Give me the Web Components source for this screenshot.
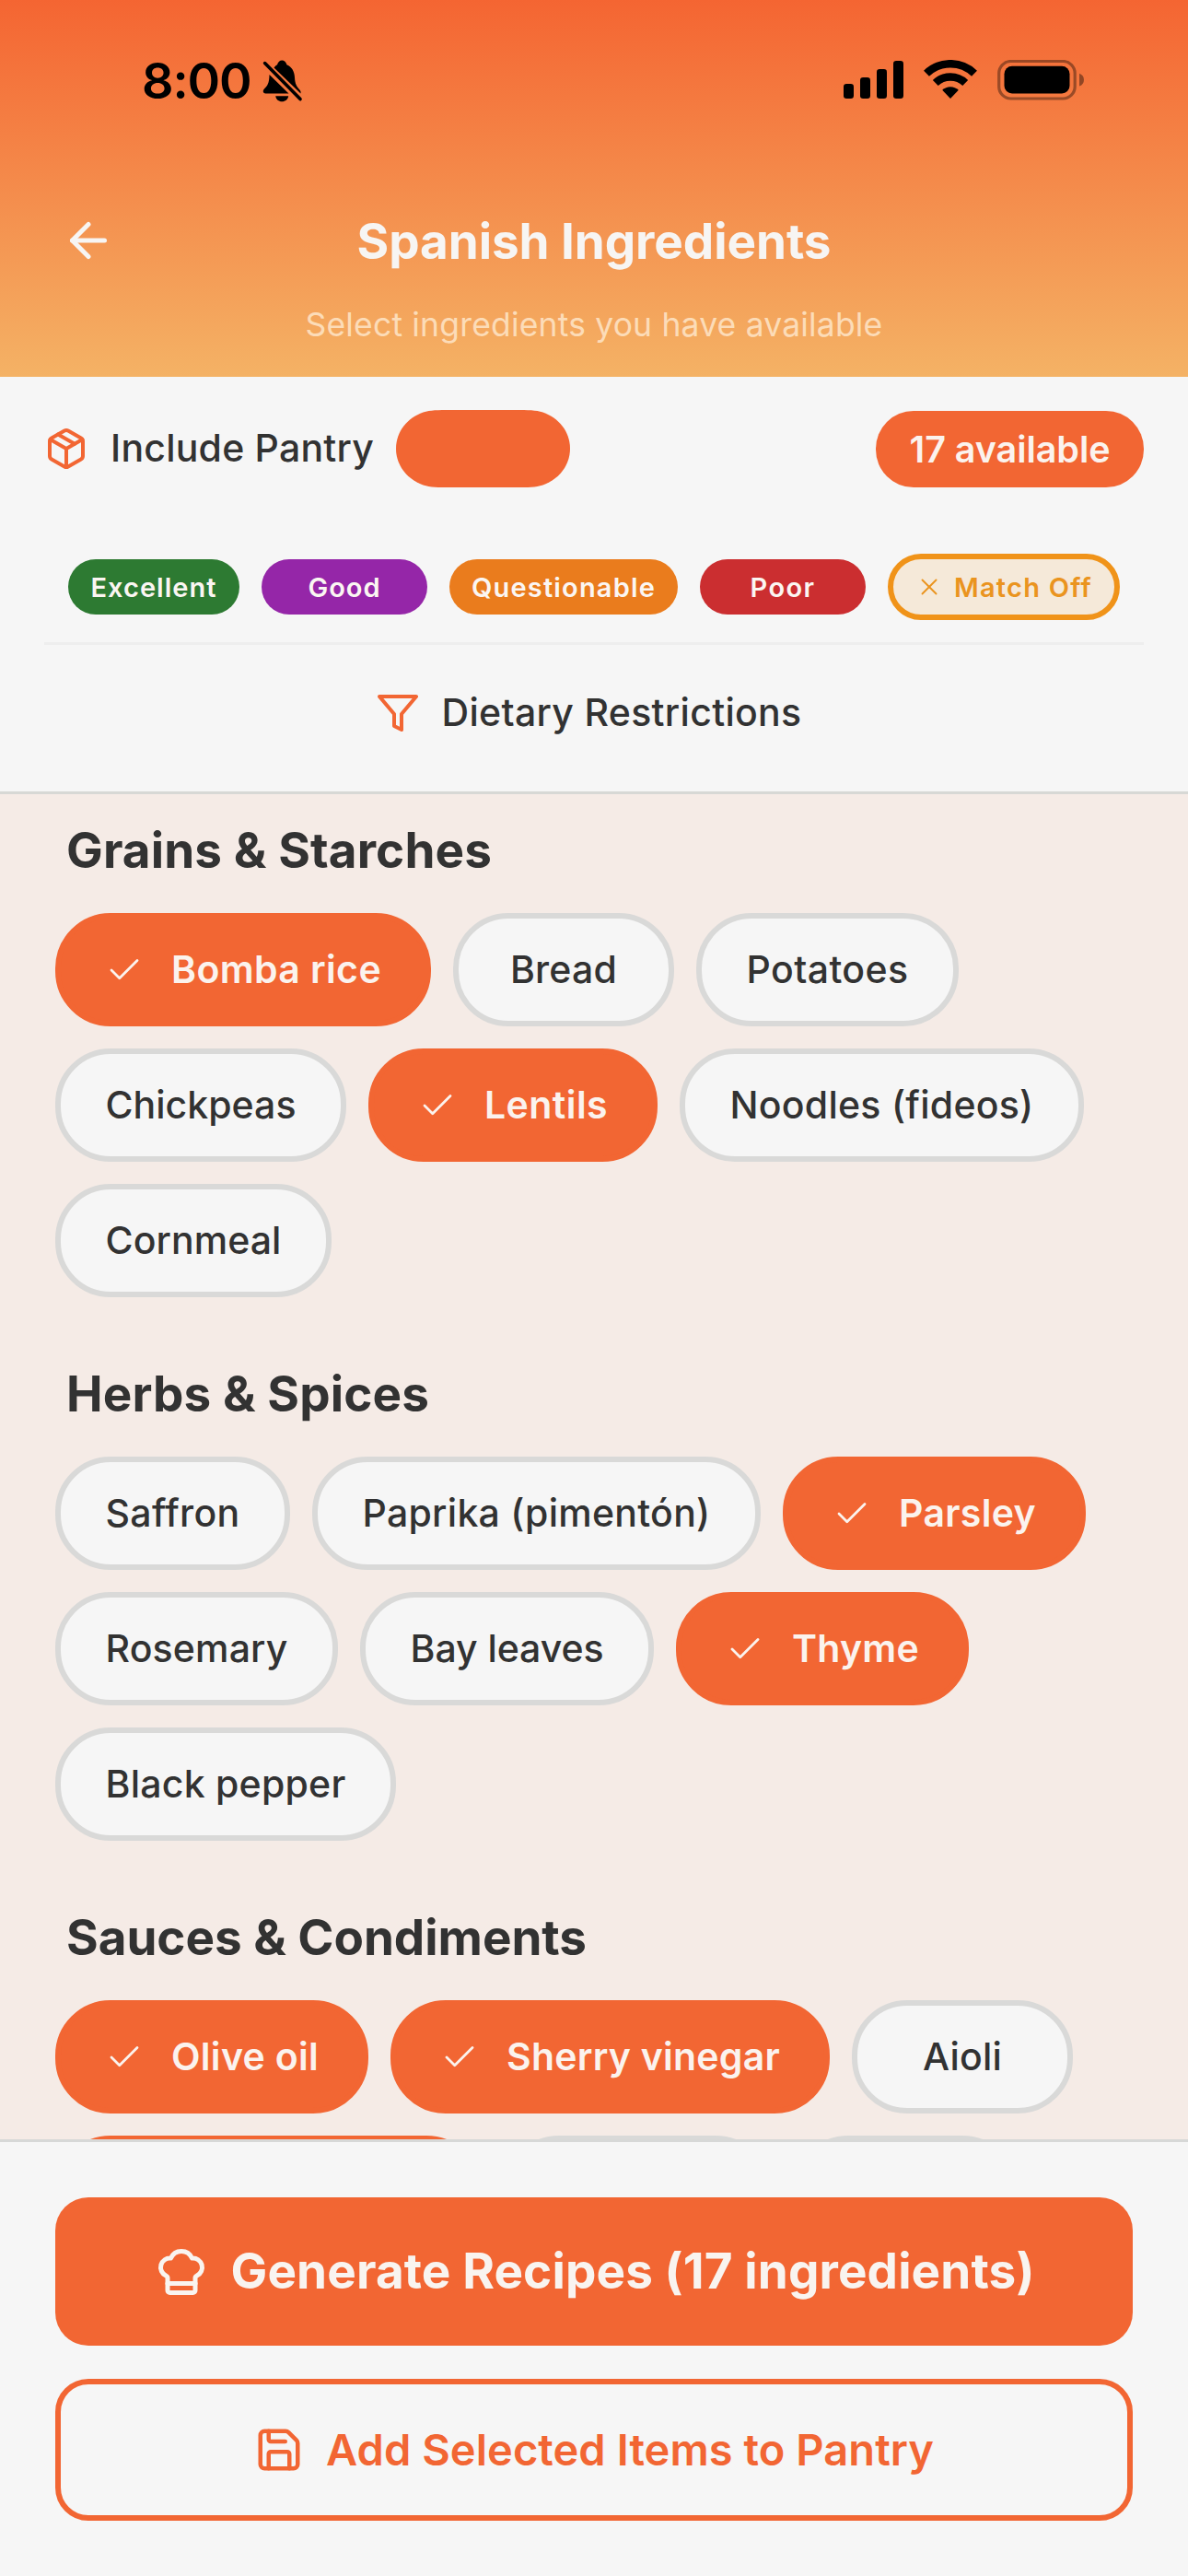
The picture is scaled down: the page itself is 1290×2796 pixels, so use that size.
<!DOCTYPE html>
<html lang="en">
<head>
<meta charset="utf-8">
<title>Spanish Ingredients</title>
<style>
html,body{margin:0;padding:0}
body{width:1290px;height:2796px;overflow:hidden;font-family:Inter,"Liberation Sans",sans-serif;background:#f5ebe6;color:#323232}
</style>
</head>
<body>
<pantry-app></pantry-app>
<script>
function define(name, html, after){
  const t=document.createElement('template'); t.innerHTML=html;
  customElements.define(name, class extends HTMLElement{
    constructor(){super();this.attachShadow({mode:'open'}).appendChild(t.content.cloneNode(true));}
    connectedCallback(){ if(after) after.call(this,this.shadowRoot); }
  });
}

/* A single text line tracked to a given advance width (w), s = size, b = weight, dy = optical shift */
customElements.define('track-text', class extends HTMLElement{
  connectedCallback(){
    const root=this.shadowRoot||this.attachShadow({mode:'open'});
    const g=n=>this.getAttribute(n);
    root.innerHTML=`<style>:host{display:block;white-space:nowrap;flex:none;line-height:1.2}span{display:inline-block}</style><span></span>`;
    const s=root.querySelector('span');
    s.textContent=g('text');
    s.style.fontSize=g('s')+'px'; s.style.fontWeight=g('b');
    if(g('w')){
      const w=+g('w'), n=[...g('text')].length;
      const nat=s.getBoundingClientRect().width;
      s.style.letterSpacing=((w-nat)/n).toFixed(3)+'px';
    }
    if(g('dy')) this.style.marginTop=g('dy')+'px';
  }
});

const ICONS={
  back:['<path d="m12 19-7-7 7-7"/><path d="M19 12H5"/>',2],
  box:['<path d="M11 21.73a2 2 0 0 0 2 0l7-4A2 2 0 0 0 21 16V8a2 2 0 0 0-1-1.73l-7-4a2 2 0 0 0-2 0l-7 4A2 2 0 0 0 3 8v8a2 2 0 0 0 1 1.73z"/><path d="M12 22V12"/><path d="m3.3 7 8.7 5 8.7-5"/><path d="m7.5 4.27 9 5.15"/>',2],
  filter:['<path d="M22 3H2l8 9.46V19l4 2v-8.54z"/>',2],
  check:['<path d="M20 6 9 17l-5-5"/>',1.6],
  x:['<path d="M18 6 6 18"/><path d="m6 6 12 12"/>',1.5],
  chef:['<path d="M17 21a1 1 0 0 0 1-1v-5.35c0-.457.316-.844.727-1.041a4 4 0 0 0-2.134-7.589 5 5 0 0 0-9.186 0 4 4 0 0 0-2.134 7.588c.411.198.727.585.727 1.041V20a1 1 0 0 0 1 1Z"/><path d="M6 17h12"/>',2],
  save:['<path d="M15.2 3a2 2 0 0 1 1.4.6l3.8 3.8a2 2 0 0 1 .6 1.4V19a2 2 0 0 1-2 2H5a2 2 0 0 1-2-2V5a2 2 0 0 1 2-2z"/><path d="M17 21v-7a1 1 0 0 0-1-1H8a1 1 0 0 0-1 1v7"/><path d="M7 3v4a1 1 0 0 0 1 1h7"/>',2]
};
customElements.define('line-icon', class extends HTMLElement{
  connectedCallback(){
    const root=this.shadowRoot||this.attachShadow({mode:'open'});
    const [p,w]=ICONS[this.getAttribute('name')], s=this.getAttribute('size');
    root.innerHTML=`<style>:host{display:block;flex:none}svg{display:block}</style>
    <svg width="${s}" height="${s}" viewBox="0 0 24 24" fill="none" stroke="currentColor" stroke-width="${w}" stroke-linecap="round" stroke-linejoin="round">${p}</svg>`;
  }
});

define('status-bar',`<style>
:host{display:flex;height:174px;box-sizing:border-box;padding:60px 112px 0 154px;justify-content:space-between;align-items:flex-start;color:#000}
.l{display:flex;align-items:flex-start;gap:12px}
.r{display:flex;align-items:flex-start;padding-top:5px}
svg{display:block}
</style>
<div class="l"><track-text text="8:00" s="54" b="600" w="118.500" dy="-4"></track-text>
<svg width="44" height="48" viewBox="0 0 44 48" style="margin-top:4px">
 <path d="M12.5 9.5C14 7.500 15.200 6.800 16 6.300C17 3.200 18.800 1.500 21.200 1.500s4.400 1.700 5.200 4.800c5.600 2.400 8.300 7.200 8.600 13.700.3 7 2.200 10 5.200 13.200 1.600 1.700 1.500 2.700 1.300 4.300z"/>
 <path d="M7.500 17 28.500 37.600H3.500c-2.800 0-3.700-2.900-1.600-5C5.300 29.300 7.400 26.500 7.500 17z"/>
 <path d="M14.200 40.200h14c-.5 3.800-3.500 6-7 6s-6.500-2.200-7-6z"/>
 <path d="M2.600 4.600 41 43.600" stroke="#000" stroke-width="3.600" stroke-linecap="round"/>
</svg></div>
<div class="r">
<svg width="66" height="44" viewBox="0 0 66 44"><rect x="0" y="26" width="11" height="16" rx="3.200"/><rect x="18" y="19" width="11" height="23" rx="3.200"/><rect x="36" y="10" width="11" height="32" rx="3.200"/><rect x="54" y="1" width="11" height="41" rx="3.200"/></svg>
<svg width="58" height="44" viewBox="0 0 58 44" style="margin-left:21.500px"><g fill="none" stroke="#000" stroke-width="8.500"><path d="M3 14.700A37.500 37.500 0 0 1 55 14.700"/><path d="M12.800 25A23.500 23.500 0 0 1 45.200 25"/></g><path d="M29 42 20.200 32.800A12.600 12.600 0 0 1 37.800 32.800Z"/></svg>
<svg width="95" height="44" viewBox="0 0 95 44" style="margin-left:22px"><rect x="1.700" y="1.500" width="82.500" height="40.500" rx="13" fill="none" stroke="#000" stroke-opacity=".37" stroke-width="3.200"/><rect x="7.500" y="6.800" width="71" height="29.600" rx="8.500"/><path d="M89 14.800c3.500 1.300 5 3.800 5 6.900s-1.500 5.600-5 6.900z" fill-opacity=".4"/></svg>
</div>`);

define('app-header',`<style>
:host{display:flex;flex-direction:column;height:409px;background:linear-gradient(#f46532,#f4b265);color:#f7f5f3}
.row{display:grid;grid-template-columns:60px 1fr 60px;padding:0 66px;height:174px;align-items:center;justify-items:center}
.sub{display:flex;justify-content:center;color:#fcdcb8;height:61px}
</style>
<status-bar></status-bar>
<div class="row"><line-icon name="back" size="60"></line-icon><track-text text="Spanish Ingredients" s="53" b="700" w="515" dy="3"></track-text></div>
<div class="sub"><track-text text="Select ingredients you have available" s="35.500" b="400" w="627" dy="-16"></track-text></div>`);

define('tag-pill',`<style>
:host{display:flex;box-sizing:border-box;height:60px;border-radius:30px;align-items:center;justify-content:center;color:#fbf6f2;flex:none;gap:12px}
:host([outline]){height:72px;border-radius:36px;border:6px solid #f09319;background:#f5e9d9;color:#ea941f}
</style><slot></slot>`,function(){this.style.width=this.getAttribute('w')+'px';if(this.hasAttribute('c'))this.style.background=this.getAttribute('c');});

define('filter-panel',`<style>
:host{display:flex;flex-direction:column;box-sizing:border-box;height:453px;background:#f6f6f6;border-bottom:3px solid #d7d8d5;padding:36px 48px 0}
.top{display:flex;align-items:center;height:84px}
.top line-icon,.diet line-icon{color:#f26633}
.lab{margin-left:24px}
.tog{display:block;margin-left:24px}
.badge{margin-left:auto;width:291px;height:83px;border-radius:41px;background:#f26633;color:#fbf3ee;display:flex;align-items:center;justify-content:center;margin-top:1px}
.tags{display:flex;gap:24px;align-items:center;justify-content:center;padding-top:72px;height:72px}
.diet{display:flex;align-items:center;justify-content:center;gap:24px;border-top:3px solid #eeeeee;margin-top:24px;height:148px;padding-right:12px}
</style>
<div class="top"><line-icon name="box" size="48"></line-icon><track-text class="lab" text="Include Pantry" s="41" b="500" w="286"></track-text>
<svg class="tog" width="189" height="84" viewBox="0 0 189 84"><path fill="#f26633" d="M60 0H129C144 0 151.500 0 159.500 2.600C176.500 8.500 189 23.500 189 42S176.500 75.500 159.500 81.400C151.500 84 144 84 129 84H60C45 84 37.500 84 29.500 81.400C12.500 75.500 0 60.500 0 42S12.500 8.500 29.500 2.600C37.500 0 45 0 60 0Z"/></svg>
<div class="badge"><track-text text="17 available" s="39.500" b="600" w="218" dy="2"></track-text></div></div>
<div class="tags">
<tag-pill w="186" c="#2d7a32"><track-text text="Excellent" s="29" b="600" w="137" dy="2"></track-text></tag-pill>
<tag-pill w="180" c="#9526a8"><track-text text="Good" s="29" b="600" w="79" dy="2"></track-text></tag-pill>
<tag-pill w="248" c="#ea7c1d"><track-text text="Questionable" s="29" b="600" w="200" dy="2"></track-text></tag-pill>
<tag-pill w="180" c="#cb2e30"><track-text text="Poor" s="29" b="600" w="71" dy="2"></track-text></tag-pill>
<tag-pill w="252" outline><line-icon name="x" size="30"></line-icon><track-text text="Match Off" s="29" b="600" w="150" dy="2"></track-text></tag-pill>
</div>
<div class="diet"><line-icon name="filter" size="48"></line-icon><track-text text="Dietary Restrictions" s="41" b="500" w="391"></track-text></div>`);

customElements.define('ingredient-chip', class extends HTMLElement{
  connectedCallback(){
    const root=this.shadowRoot||this.attachShadow({mode:'open'});
    const on=this.hasAttribute('on'), w=+this.getAttribute('w'), t=this.getAttribute('text');
    const tw=this.getAttribute('t')||(on?w-180:w-109);
    root.innerHTML=`<style>
:host{display:flex;box-sizing:border-box;flex:none;width:${w}px;height:123px;border-radius:60px;border:6px solid #d9d9d8;background:#f6f6f6;color:#323232;align-items:center;justify-content:center;gap:30px}
:host([on]){border-color:#f26633;background:#f26633;color:#fbf3ee}
</style>${on&&t?'<line-icon name="check" size="42"></line-icon>':''}${t?`<track-text text="${t}" s="41" b="${on?600:500}" w="${tw}"></track-text>`:''}`;
  }
});

define('ingredient-section',`<style>
:host{display:flex;flex-direction:column;height:590px;flex:none}
.h{box-sizing:border-box;padding:0 0 6px 72px;height:129px;display:flex;align-items:center;color:#323232}
.c{display:flex;flex-wrap:wrap;gap:24px;padding:0 48px 0 60px}
</style><div class="h"></div><div class="c"><slot></slot></div>`,function(r){
  r.querySelector('.h').innerHTML=`<track-text text="${this.getAttribute('heading').replace('&','&amp;')}" s="53" b="700" w="${this.getAttribute('w')}"></track-text>`;
});

define('action-button',`<style>
:host{display:flex;box-sizing:border-box;align-items:center;justify-content:center;border-radius:36px;height:161px;background:#f26633;color:#f9f4f0;gap:24px}
:host([outline]){height:154px;background:none;border:6px solid #f26633;color:#f26633;gap:24px}
</style><slot></slot>`);

define('action-bar',`<style>
:host{display:flex;flex-direction:column;box-sizing:border-box;height:474px;flex:none;background:#f6f6f6;border-top:3px solid #d7d8d7;padding:60px 60px 0;gap:36px}
</style>
<action-button><line-icon name="chef" size="60"></line-icon><track-text text="Generate Recipes (17 ingredients)" s="53" b="700" w="873" dy="1"></track-text></action-button>
<action-button outline><line-icon name="save" size="54"></line-icon><track-text text="Add Selected Items to Pantry" s="47" b="600" w="660"></track-text></action-button>`);

define('pantry-app',`<style>
:host{display:flex;flex-direction:column;width:1290px;height:2796px;background:#f5ebe6}
.list{flex:1;min-height:0;overflow:hidden;display:flex;flex-direction:column}
</style>
<app-header></app-header><filter-panel></filter-panel>
<div class="list">
<ingredient-section heading="Grains & Starches" w="462">
<ingredient-chip on w="408" text="Bomba rice"></ingredient-chip><ingredient-chip w="240" t="116" text="Bread"></ingredient-chip><ingredient-chip w="285" text="Potatoes"></ingredient-chip>
<ingredient-chip w="316" text="Chickpeas"></ingredient-chip><ingredient-chip on w="314" text="Lentils"></ingredient-chip><ingredient-chip w="439" text="Noodles (fideos)"></ingredient-chip>
<ingredient-chip w="300" text="Cornmeal"></ingredient-chip>
</ingredient-section>
<ingredient-section heading="Herbs & Spices" w="394">
<ingredient-chip w="255" text="Saffron"></ingredient-chip><ingredient-chip w="487" text="Paprika (pimentón)"></ingredient-chip><ingredient-chip on w="329" text="Parsley"></ingredient-chip>
<ingredient-chip w="307" text="Rosemary"></ingredient-chip><ingredient-chip w="319" text="Bay leaves"></ingredient-chip><ingredient-chip on w="318" text="Thyme"></ingredient-chip>
<ingredient-chip w="370" text="Black pepper"></ingredient-chip>
</ingredient-section>
<ingredient-section heading="Sauces & Condiments" w="565">
<ingredient-chip on w="340" text="Olive oil"></ingredient-chip><ingredient-chip on w="477" text="Sherry vinegar"></ingredient-chip><ingredient-chip w="240" t="86" text="Aioli"></ingredient-chip>
<ingredient-chip on w="463"></ingredient-chip><ingredient-chip w="290"></ingredient-chip><ingredient-chip w="244"></ingredient-chip>
</ingredient-section>
</div>
<action-bar></action-bar>`);
</script>
</body>
</html>
